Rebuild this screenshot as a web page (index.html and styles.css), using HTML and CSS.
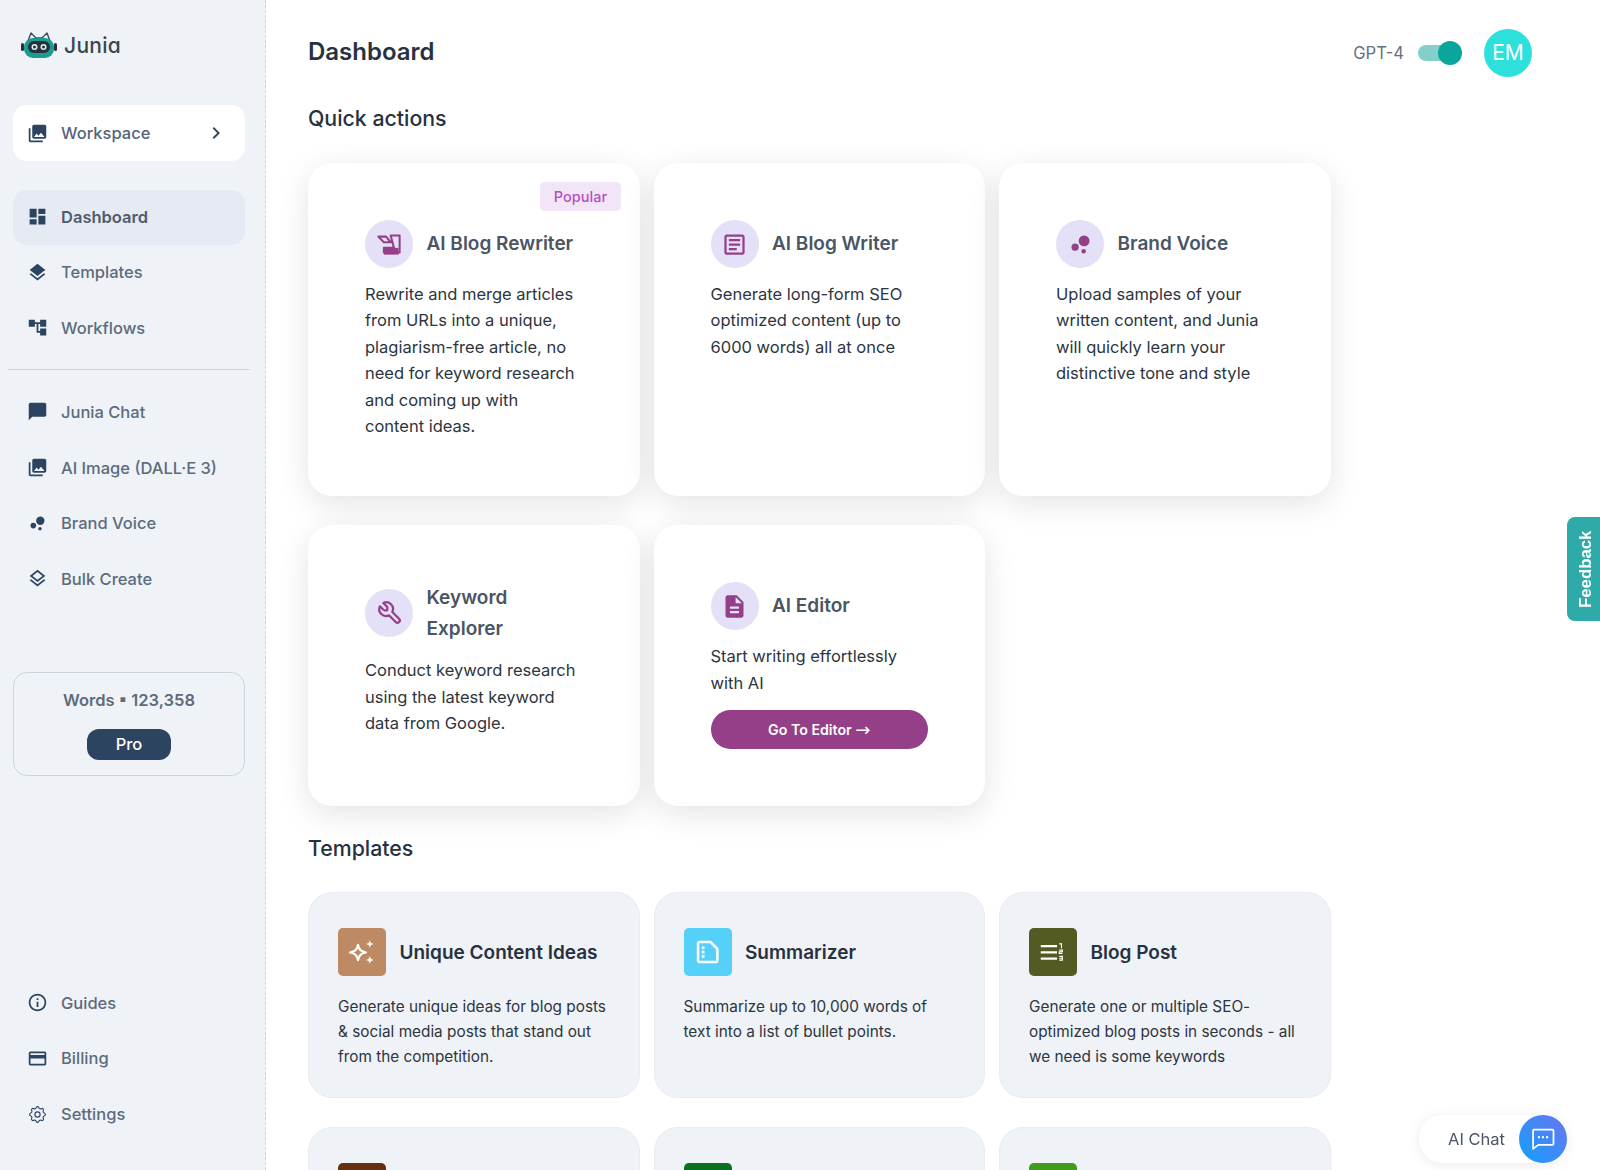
FILE: index.html
```html
<!DOCTYPE html>
<html lang="en">
<head>
    <meta charset="UTF-8">
    <meta name="viewport" content="width=device-width, initial-scale=1.0">
    <title>Dashboard</title>
    <link rel="stylesheet" href="styles.css">
</head>
<body>
    <aside class="sidebar">
        <div class="logo">
            <svg class="logo-mark" viewBox="0 0 38 30">
                <path d="M8 11 L11 3 L16 8 H22 L27 3 L30 11" fill="none" stroke="#3b4a57" stroke-width="1.4" stroke-linejoin="round"/>
                <rect x="1" y="13" width="3" height="8" rx="1.5" fill="#27313b"/>
                <rect x="34" y="13" width="3" height="8" rx="1.5" fill="#27313b"/>
                <rect x="4" y="8" width="30" height="20" rx="9" fill="#1b9c92"/>
                <rect x="8" y="11" width="22" height="12" rx="6" fill="#27313b"/>
                <circle cx="14.500" cy="17" r="3" fill="#d9f3f0"/>
                <circle cx="23.500" cy="17" r="3" fill="#d9f3f0"/>
                <circle cx="14.500" cy="17" r="1.500" fill="#27313b"/>
                <circle cx="23.500" cy="17" r="1.500" fill="#27313b"/>
            </svg>
            <span class="logo-text">Junia</span>
        </div>

        <a class="workspace">
            <svg class="nav-icon" viewBox="0 0 24 24"><path d="M22 16V4c0-1.100-.9-2-2-2H8c-1.100 0-2 .9-2 2v12c0 1.100.9 2 2 2h12c1.100 0 2-.9 2-2zm-11-4l2.030 2.710L16 11l4 5H8l3-4zM2 6v14c0 1.100.9 2 2 2h14v-2H4V6H2z"/></svg>
            <span>Workspace</span>
            <svg class="chevron" viewBox="0 0 24 24"><path d="M8.590 16.590L13.170 12 8.590 7.410 10 6l6 6-6 6z"/></svg>
        </a>

        <nav class="nav nav-top">
            <a class="nav-item active">
                <svg class="nav-icon" viewBox="0 0 24 24"><path d="M3 13h8V3H3v10zm0 8h8v-6H3v6zm10 0h8V11h-8v10zm0-18v6h8V3h-8z"/></svg>
                <span>Dashboard</span>
            </a>
            <a class="nav-item">
                <svg class="nav-icon" viewBox="0 0 24 24"><path d="M11.990 18.540l-7.370-5.730L3 14.070l9 7 9-7-1.630-1.270-7.380 5.740zM12 16l7.360-5.730L21 9l-9-7-9 7 1.630 1.270L12 16z"/></svg>
                <span>Templates</span>
            </a>
            <a class="nav-item">
                <svg class="nav-icon" viewBox="0 0 24 24"><path d="M22 11V3h-7v3H9V3H2v8h7V8h2v10h4v3h7v-8h-7v3h-2V8h2v3z"/></svg>
                <span>Workflows</span>
            </a>
        </nav>

        <div class="divider"></div>

        <nav class="nav">
            <a class="nav-item">
                <svg class="nav-icon" viewBox="0 0 24 24"><path d="M20 2H4c-1.100 0-2 .9-2 2v18l4-4h14c1.100 0 2-.9 2-2V4c0-1.100-.9-2-2-2z"/></svg>
                <span>Junia Chat</span>
            </a>
            <a class="nav-item">
                <svg class="nav-icon" viewBox="0 0 24 24"><path d="M22 16V4c0-1.100-.9-2-2-2H8c-1.100 0-2 .9-2 2v12c0 1.100.9 2 2 2h12c1.100 0 2-.9 2-2zm-11-4l2.030 2.710L16 11l4 5H8l3-4zM2 6v14c0 1.100.9 2 2 2h14v-2H4V6H2z"/></svg>
                <span>AI Image (DALL·E 3)</span>
            </a>
            <a class="nav-item">
                <svg class="nav-icon" viewBox="0 0 24 24"><circle cx="7.200" cy="14.400" r="3.200"/><circle cx="14.800" cy="18" r="2"/><circle cx="15.200" cy="8.800" r="4.800"/></svg>
                <span>Brand Voice</span>
            </a>
            <a class="nav-item">
                <svg class="nav-icon" viewBox="0 0 24 24"><path d="M11.990 18.540l-7.370-5.730L3 14.070l9 7 9-7-1.630-1.270-7.380 5.740zM12 16l7.360-5.730L21 9l-9-7-9 7 1.630 1.270L12 16zm0-11.470L17.740 9 12 13.470 6.260 9 12 4.530z"/></svg>
                <span>Bulk Create</span>
            </a>
        </nav>

        <div class="words-card">
            <div class="words-count">Words ▪ 123,358</div>
            <div class="plan-pill">Pro</div>
        </div>

        <nav class="nav nav-bottom">
            <a class="nav-item">
                <svg class="nav-icon" viewBox="0 0 24 24"><path d="M11 7h2v2h-2zm0 4h2v6h-2zm1-9C6.480 2 2 6.480 2 12s4.480 10 10 10 10-4.480 10-10S17.520 2 12 2zm0 18c-4.410 0-8-3.590-8-8s3.590-8 8-8 8 3.590 8 8-3.590 8-8 8z"/></svg>
                <span>Guides</span>
            </a>
            <a class="nav-item">
                <svg class="nav-icon" viewBox="0 0 24 24"><path d="M20 4H4c-1.110 0-1.990.89-1.990 2L2 18c0 1.110.89 2 2 2h16c1.110 0 2-.89 2-2V6c0-1.110-.89-2-2-2zm0 14H4v-6h16v6zm0-10H4V6h16v2z"/></svg>
                <span>Billing</span>
            </a>
            <a class="nav-item">
                <svg class="nav-icon nav-icon-line" viewBox="0 0 24 24"><path d="M10.325 4.317c.426-1.756 2.924-1.756 3.350 0a1.724 1.724 0 002.573 1.066c1.543-.94 3.310.826 2.370 2.370a1.724 1.724 0 001.065 2.572c1.756.426 1.756 2.924 0 3.350a1.724 1.724 0 00-1.066 2.573c.94 1.543-.826 3.310-2.370 2.370a1.724 1.724 0 00-2.572 1.065c-.426 1.756-2.924 1.756-3.350 0a1.724 1.724 0 00-2.573-1.066c-1.543.94-3.310-.826-2.370-2.370a1.724 1.724 0 00-1.065-2.572c-1.756-.426-1.756-2.924 0-3.350a1.724 1.724 0 001.066-2.573c-.94-1.543.826-3.310 2.370-2.370.996.608 2.296.07 2.572-1.065z"/><circle cx="12" cy="12" r="3"/></svg>
                <span>Settings</span>
            </a>
        </nav>
    </aside>

    <main class="main">
        <header class="topbar">
            <h1>Dashboard</h1>
            <div class="topbar-right">
                <span class="model-label">GPT-4</span>
                <div class="toggle"><div class="toggle-knob"></div></div>
                <div class="avatar">EM</div>
            </div>
        </header>

        <h2 class="section-title">Quick actions</h2>
        <section class="grid quick-grid">
            <div class="card quick-card">
                <span class="badge">Popular</span>
                <div class="card-head">
                    <div class="circle-icon">
                        <svg viewBox="0 0 24 24">
                            <path d="M2 5h7l4 5H7z M13 4h8v15H7v-4h9z" fill="none" stroke="#953f88" stroke-width="1.800" stroke-linejoin="round"/>
                            <path d="M7 15h13v6H7z"/>
                        </svg>
                    </div>
                    <h3>AI Blog Rewriter</h3>
                </div>
                <p>Rewrite and merge articles from URLs into a unique, plagiarism-free article, no need for keyword research and coming up with content ideas.</p>
            </div>
            <div class="card quick-card">
                <div class="card-head">
                    <div class="circle-icon">
                        <svg viewBox="0 0 24 24"><path d="M19 5v14H5V5h14m0-2H5c-1.100 0-2 .9-2 2v14c0 1.100.9 2 2 2h14c1.100 0 2-.9 2-2V5c0-1.100-.9-2-2-2z"/><path d="M14 17H7v-2h7v2zm3-4H7v-2h10v2zm0-4H7V7h10v2z"/></svg>
                    </div>
                    <h3>AI Blog Writer</h3>
                </div>
                <p>Generate long-form SEO optimized content (up to 6000 words) all at once</p>
            </div>
            <div class="card quick-card">
                <div class="card-head">
                    <div class="circle-icon">
                        <svg viewBox="0 0 24 24"><circle cx="7.200" cy="14.400" r="3.200"/><circle cx="14.800" cy="18" r="2"/><circle cx="15.200" cy="8.800" r="4.800"/></svg>
                    </div>
                    <h3>Brand Voice</h3>
                </div>
                <p>Upload samples of your written content, and Junia will quickly learn your distinctive tone and style</p>
            </div>
            <div class="card quick-card">
                <div class="card-head head-tall">
                    <div class="circle-icon">
                        <svg viewBox="0 0 24 24"><path d="M7 10h3v-3l-3.500-3.500a6 6 0 0 1 8 8l6 6a2 2 0 0 1-3 3l-6-6a6 6 0 0 1-8-8l3.500 3.500" fill="none" stroke="#953f88" stroke-width="2" stroke-linejoin="round"/></svg>
                    </div>
                    <h3 class="narrow-title">Keyword Explorer</h3>
                </div>
                <p>Conduct keyword research using the latest keyword data from Google.</p>
            </div>
            <div class="card quick-card">
                <div class="card-head">
                    <div class="circle-icon">
                        <svg viewBox="0 0 24 24"><path d="M14 2H6c-1.100 0-1.990.9-1.990 2L4 20c0 1.100.89 2 1.990 2H18c1.100 0 2-.9 2-2V8l-6-6zm2 16H8v-2h8v2zm0-4H8v-2h8v2zm-3-5V3.500L18.500 9H13z"/></svg>
                    </div>
                    <h3>AI Editor</h3>
                </div>
                <p>Start writing effortlessly with AI</p>
                <a class="editor-btn">Go To Editor <span class="btn-arrow">→</span></a>
            </div>
        </section>

        <h2 class="section-title templates-title">Templates</h2>
        <section class="grid template-grid">
            <div class="card template-card">
                <div class="card-head">
                    <div class="square-icon tone-tan">
                        <svg viewBox="0 0 24 24"><path d="M8.800 6.200c.8 4 2.300 5.400 6.400 6.200-4.100.8-5.600 2.200-6.400 6.200-.8-4-2.300-5.400-6.400-6.200 4.100-.8 5.600-2.200 6.400-6.200z" fill="none" stroke="#fff" stroke-width="1.700" stroke-linejoin="round"/><path d="M18.300 2.400c.4 2.200 1.100 2.900 3.200 3.200-2.100.3-2.800 1-3.200 3.200-.4-2.200-1.100-2.900-3.200-3.200 2.100-.3 2.800-1 3.200-3.200zM18.300 15c.4 2.200 1.100 2.900 3.200 3.300-2.100.3-2.800 1-3.200 3.300-.4-2.300-1.100-3-3.200-3.300 2.100-.4 2.800-1.100 3.200-3.300z" fill="#fff"/></svg>
                    </div>
                    <h3>Unique Content Ideas</h3>
                </div>
                <p>Generate unique ideas for blog posts &amp; social media posts that stand out from the competition.</p>
            </div>
            <div class="card template-card">
                <div class="card-head">
                    <div class="square-icon tone-sky">
                        <svg viewBox="0 0 24 24"><path d="M5.500 4h8.500l5.500 5.500v9c0 .8-.7 1.500-1.500 1.500H5.500c-.8 0-1.500-.7-1.500-1.500v-13C4 4.700 4.700 4 5.500 4z" fill="none" stroke="#fff" stroke-width="2" stroke-linejoin="round"/><rect x="7" y="7.500" width="2.200" height="2.200" fill="#fff"/><rect x="7" y="11" width="2.200" height="2.200" fill="#fff"/><rect x="7" y="14.500" width="2.200" height="2.200" fill="#fff"/></svg>
                    </div>
                    <h3>Summarizer</h3>
                </div>
                <p>Summarize up to 10,000 words of text into a list of bullet points.</p>
            </div>
            <div class="card template-card">
                <div class="card-head">
                    <div class="square-icon tone-olive">
                        <svg viewBox="0 0 24 24"><path d="M2.200 6.400h13v1.700h-13zM2.200 11.400h13v1.700h-13zM2.200 16.400h13v1.700h-13z" fill="#fff"/><path d="M17 5.500h1.800v3.500M17 10.500h2.500v1.300h-2.500v1.300h2.500M17 15.500h2.500v3H17M17 17h2.500" fill="none" stroke="#fff" stroke-width=".9"/></svg>
                    </div>
                    <h3>Blog Post</h3>
                </div>
                <p>Generate one or multiple SEO-optimized blog posts in seconds - all we need is some keywords</p>
            </div>
            <div class="card template-card">
                <div class="card-head"><div class="square-icon tone-brown"></div></div>
            </div>
            <div class="card template-card">
                <div class="card-head"><div class="square-icon tone-green"></div></div>
            </div>
            <div class="card template-card">
                <div class="card-head"><div class="square-icon tone-lime"></div></div>
            </div>
        </section>
    </main>

    <a class="feedback">Feedback</a>

    <div class="ai-chat">
        <span>AI Chat</span>
        <div class="ai-chat-btn">
            <svg viewBox="0 0 24 24"><path d="M4 4h16c.6 0 1 .4 1 1v11c0 .6-.4 1-1 1H8l-4.500 3.500V5c0-.6.4-1 1-1z" fill="none" stroke="#fff" stroke-width="1.500" stroke-linejoin="round"/><circle cx="8.500" cy="10.500" r="1" fill="#fff"/><circle cx="12" cy="10.500" r="1" fill="#fff"/><circle cx="15.500" cy="10.500" r="1" fill="#fff"/></svg>
        </div>
    </div>
</body>
</html>
```

FILE: styles.css
```css
* {
    box-sizing: border-box;
}
body {
    display: flex;
    height: 100vh;
    margin: 0;
    overflow: hidden;
    background: #fff;
    font-family: "Inter", "Liberation Sans", sans-serif;
    color: #1a202c;
}
h1, h2, h3, p {
    margin: 0;
}

/* sidebar */
.sidebar {
    display: flex;
    flex-direction: column;
    flex: 0 0 266px;
    height: 100%;
    padding: 0 20px 0 13px;
    background: #eff3f8;
    border-right: 1px dashed #cbd5e0;
}
.logo {
    display: flex;
    align-items: center;
    gap: 6px;
    height: 105px;
    padding: 0 0 15px 7px;
}
.logo-mark {
    width: 38px;
    height: 30px;
}
.logo-text {
    font-size: 21px;
    font-weight: 500;
    letter-spacing: 0.3px;
    color: #3a4550;
    font-feature-settings: "cv11";
}
.workspace {
    display: flex;
    align-items: center;
    gap: 13px;
    height: 56px;
    padding: 0 17px 0 14px;
    background: #fff;
    border-radius: 14px;
    font-size: 16.500px;
    font-weight: 500;
    color: #566375;
}
.chevron {
    width: 24px;
    height: 24px;
    margin-left: auto;
    fill: #3c4858;
}
.nav {
    display: flex;
    flex-direction: column;
    gap: 0.700px;
}
.nav-top {
    margin-top: 29px;
}
.nav-top .nav-item {
    padding-bottom: 2px;
}
.divider {
    height: 1px;
    margin: 13px -5px 14px -5px;
    background: #cbd5e0;
}
.nav-item {
    display: flex;
    align-items: center;
    gap: 13px;
    height: 55px;
    padding: 0 14px;
    border-radius: 14px;
    font-size: 16.500px;
    font-weight: 500;
    color: #5d6b7c;
}
.nav-item.active {
    background: #e6ebf3;
    font-weight: 600;
    color: #4e5c6d;
}
.nav-icon {
    flex: none;
    width: 21px;
    height: 21px;
    fill: #2c4460;
}
.nav-icon-line {
    fill: none;
    stroke: #2c4460;
    stroke-width: 1.300;
}
.words-card {
    display: flex;
    flex-direction: column;
    align-items: center;
    gap: 19px;
    height: 104px;
    margin-top: 66px;
    padding-top: 17px;
    border: 1px solid #cbd5e0;
    border-radius: 14px;
    font-size: 16.500px;
    font-weight: 600;
    color: #5d6b7c;
}
.plan-pill {
    width: 84px;
    height: 31px;
    border-radius: 12px;
    background: #2c4460;
    color: #fff;
    font-weight: 500;
    line-height: 31px;
    text-align: center;
}
.nav-bottom {
    margin-top: auto;
    padding-bottom: 28.500px;
}

/* main column */
.main {
    flex: 1;
    min-width: 0;
    padding: 0 0 0 42px;
}
.topbar {
    display: flex;
    align-items: center;
    justify-content: space-between;
    height: 104px;
    padding-right: 68px;
}
.topbar h1 {
    padding-bottom: 2px;
    font-size: 24px;
    font-weight: 600;
    color: #27313f;
}
.topbar-right {
    display: flex;
    align-items: center;
    margin-top: 1px;
}
.model-label {
    font-size: 16.600px;
    color: #667180;
}
.toggle {
    position: relative;
    width: 40px;
    height: 16px;
    margin: 0 26px 0 14px;
    border-radius: 8px;
    background: #83cfcb;
}
.toggle-knob {
    position: absolute;
    top: -4px;
    right: -4px;
    width: 24px;
    height: 24px;
    border-radius: 50%;
    background: #0ca59e;
}
.avatar {
    width: 48px;
    height: 48px;
    border-radius: 50%;
    background: #2de0dc;
    color: #fff;
    font-size: 21px;
    line-height: 48px;
    text-align: center;
}
.section-title {
    height: 59px;
    font-size: 21.300px;
    font-weight: 500;
    line-height: 28px;
    color: #27313f;
}
.templates-title {
    height: 58.500px;
    margin-top: 27.500px;
}
.grid {
    display: grid;
    grid-template-columns: repeat(3, 331.500px);
    column-gap: 14px;
    row-gap: 28.700px;
}

/* cards */
.card {
    position: relative;
    border-radius: 24px;
}
.quick-card {
    padding: 57px;
    background: #fff;
    box-shadow: 0 8px 32px rgba(0, 0, 0, 0.11);
}
.template-card {
    height: 206px;
    padding: 35px 29px;
    background: #eff2f7;
    border: 1px solid #e8ecf2;
}
.card-head {
    display: flex;
    align-items: center;
    gap: 13.500px;
    margin-bottom: 13px;
}
.head-tall {
    margin-bottom: 14px;
}
.card-head h3 {
    font-size: 19px;
    font-weight: 600;
    line-height: 30.500px;
    color: #4b5563;
}
.narrow-title {
    width: 110px;
    margin: 1px 0 -1px;
}
.quick-card p {
    padding-right: 6px;
    font-size: 16.500px;
    line-height: 26.400px;
    color: #2d3540;
}
.circle-icon {
    display: flex;
    align-items: center;
    justify-content: center;
    flex: none;
    width: 48px;
    height: 48px;
    border-radius: 50%;
    background: #e3e0f7;
}
.circle-icon svg {
    width: 27px;
    height: 27px;
    fill: #953f88;
}
.badge {
    position: absolute;
    top: 19px;
    right: 19px;
    padding: 0 13.500px;
    border-radius: 5px;
    background: #f2e5f8;
    color: #b34fc6;
    font-size: 14.500px;
    font-weight: 500;
    line-height: 29px;
}
.editor-btn {
    display: block;
    height: 39.500px;
    margin-top: 14px;
    border-radius: 20px;
    background: #953f88;
    color: #fff;
    font-size: 14.200px;
    font-weight: 600;
    line-height: 39px;
    text-align: center;
}
.btn-arrow {
    font-family: "DejaVu Sans", sans-serif;
    font-size: 18px;
    font-weight: 400;
    line-height: 1;
    vertical-align: -1px;
}
.template-card .card-head {
    margin-bottom: 18px;
}
.template-card h3 {
    padding-top: 2px;
    color: #27313f;
}
.template-card p {
    font-size: 15.350px;
    line-height: 25px;
    color: #2d3540;
}
.square-icon {
    display: flex;
    align-items: center;
    justify-content: center;
    flex: none;
    width: 48px;
    height: 48px;
    border-radius: 5px;
}
.square-icon svg {
    width: 30px;
    height: 30px;
}
.tone-tan { background: #bd8a64; }
.tone-sky { background: #55d0f8; }
.tone-olive { background: #545a22; }
.tone-brown { background: #652f10; }
.tone-green { background: #0a7120; }
.tone-lime { background: #409c1c; }

/* floating bits */
.feedback {
    position: fixed;
    top: 517px;
    right: 0;
    width: 33px;
    height: 104px;
    padding-right: 4px;
    border-radius: 0 8px 8px 0;
    background: #2eaaa8;
    color: #fff;
    font-family: "Liberation Sans", sans-serif;
    font-size: 16.800px;
    font-weight: 700;
    line-height: 29px;
    text-align: center;
    writing-mode: vertical-rl;
    transform: rotate(180deg);
}
.ai-chat {
    position: fixed;
    right: 33px;
    bottom: 7px;
    display: flex;
    align-items: center;
    justify-content: space-between;
    width: 148px;
    height: 48px;
    padding-left: 29px;
    border-radius: 24px;
    background: #fff;
    box-shadow: 0 2px 14px rgba(0, 0, 0, 0.08);
    font-size: 16.500px;
    color: #4a5568;
}
.ai-chat-btn {
    display: flex;
    align-items: center;
    justify-content: center;
    width: 48px;
    height: 48px;
    border-radius: 50%;
    background: linear-gradient(45deg, #12a0ff, #6a74ee);
}
.ai-chat-btn svg {
    width: 28px;
    height: 28px;
}
```
